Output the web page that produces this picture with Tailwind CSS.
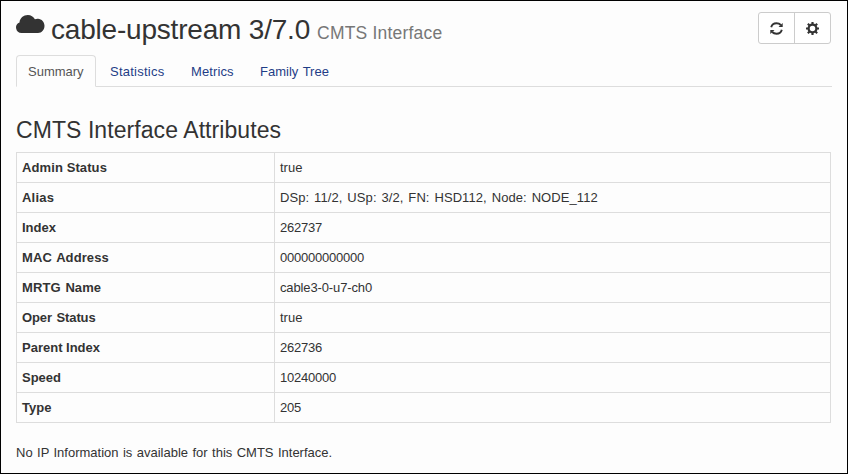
<!DOCTYPE html>
<html lang="en">
<head>
<meta charset="utf-8">
<title>cable-upstream 3/7.0</title>
<script src="https://cdn.jsdelivr.net/npm/@tailwindcss/browser@4"></script>
</head>
<body class="h-[474px] w-[848px] overflow-hidden border border-black bg-[#fdfdfd] px-[15px] font-['Liberation_Sans',Arial,sans-serif] text-[13px] leading-5 text-[#333]">
<header class="mr-px flex h-[54px] items-start justify-between pt-[11px]">
  <h1 class="flex items-start text-[28px] leading-[34px]">
    <svg class="mt-[3px] mr-[6px] h-[18px] w-[29px]" viewBox="0 0 29 18" fill="#333"><path d="M5.500 18A5.500 5.500 0 0 1 3.500 7.400C3.800 3.200 7.500 0 11.800 0C15 0 17.500 1.600 18.900 4.300C20 3.800 21 3.600 22 3.700C25.800 3.900 28.500 7 28.500 10.800C28.500 14.800 25.800 18 22 18Z"/></svg>
    <span class="pt-px tracking-[-0.2px]">cable-upstream 3/7.0</span>
    <small class="ml-[7px] pt-1 text-[17.5px] tracking-[0.2px] text-[#777]">CMTS Interface</small>
  </h1>
  <div class="flex h-8 w-[73px] rounded-[3px] border border-[#ccc] bg-white">
    <button class="flex w-9 items-center justify-center border-r border-[#ccc]" aria-label="Refresh">
      <svg class="h-[13px] w-[13px]" viewBox="0 0 13 13" fill="none" stroke="#333" stroke-width="1.900"><path d="M1.200 5.200C1.800 2.700 3.900 1.200 6.500 1.200C8.300 1.200 9.700 1.800 10.800 3"/><path d="M11.800 7.800C11.200 10.300 9.100 11.800 6.500 11.800C4.700 11.800 3.300 11.200 2.200 10"/><path d="M12.700.9V5.100H8.500ZM.3 12.100V7.900H4.500Z" fill="#333" stroke="none"/></svg>
    </button>
    <button class="flex flex-1 items-center justify-center" aria-label="Settings">
      <svg class="h-[13px] w-[13px]" viewBox="0 0 12 12"><circle cx="6" cy="6" r="3.600" fill="none" stroke="#333" stroke-width="2.100"/><path d="M5 0H7V2H5ZM5 10H7V12H5ZM0 5H2V7H0ZM10 5H12V7H10ZM1 2.400L2.400 1L4 2.600L2.600 4ZM9.600 1L11 2.400L9.400 4L8 2.600ZM1 9.600L2.600 8L4 9.400L2.400 11ZM9.400 8L11 9.600L9.600 11L8 9.400Z" fill="#333"/></svg>
    </button>
  </div>
</header>
<nav class="flex h-8 border-b border-[#ddd] text-[#1f3d87]">
  <a class="h-8 w-20 rounded-t border border-[#ddd] border-b-[#fdfdfd] pt-1.5 pl-[11px] text-[#555]">Summary</a>
  <a class="w-[81px] pt-[7px] pl-3.5 tracking-[0.25px]">Statistics</a>
  <a class="w-[69px] pt-[7px] pl-3.5 tracking-[0.1px]">Metrics</a>
  <a class="pt-[7px] pl-3.5 [word-spacing:1px]">Family Tree</a>
</nav>
<main>
  <h2 class="mt-7 text-[23px] leading-[30px] tracking-[0.07px]">CMTS Interface Attributes</h2>
  <table class="mt-[7px] w-[815px] table-fixed border-collapse text-left [&_td]:h-[30px] [&_td]:border [&_td]:border-[#ddd] [&_td]:px-[5px] [&_td]:py-0 [&_th]:h-[30px] [&_th]:w-[258px] [&_th]:border [&_th]:border-[#ddd] [&_th]:px-[5px] [&_th]:py-0">
    <tbody>
      <tr><th class="tracking-[0.1px]">Admin Status</th><td>true</td></tr>
      <tr><th class="tracking-[0.2px]">Alias</th><td class="tracking-[0.08px] [word-spacing:1.2px]">DSp: 11/2, USp: 3/2, FN: HSD112, Node: NODE_112</td></tr>
      <tr><th>Index</th><td class="tracking-[-0.23px]">262737</td></tr>
      <tr><th class="tracking-[0.1px] [word-spacing:1px]">MAC Address</th><td class="tracking-[-0.23px]">000000000000</td></tr>
      <tr><th class="tracking-[0.1px] [word-spacing:1px]">MRTG Name</th><td class="tracking-[-0.13px]">cable3-0-u7-ch0</td></tr>
      <tr><th class="tracking-[-0.1px] [word-spacing:1px]">Oper Status</th><td>true</td></tr>
      <tr><th>Parent Index</th><td class="tracking-[-0.23px]">262736</td></tr>
      <tr><th>Speed</th><td class="tracking-[-0.23px]">10240000</td></tr>
      <tr><th>Type</th><td class="tracking-[-0.23px]">205</td></tr>
    </tbody>
  </table>
  <p class="mt-5 [word-spacing:0.8px]">No IP Information is available for this CMTS Interface.</p>
</main>
</body>
</html>
